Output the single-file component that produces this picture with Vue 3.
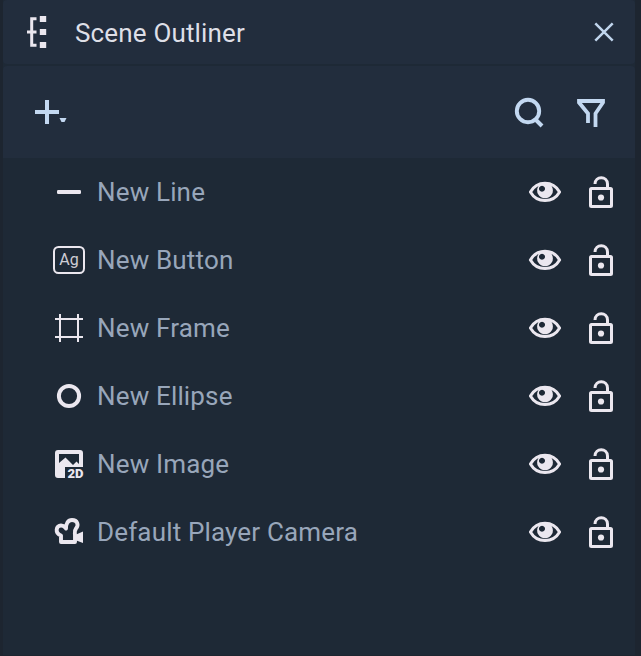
<script setup>
const rows = [
  { type: 'line', name: 'New Line' },
  { type: 'button', name: 'New Button' },
  { type: 'frame', name: 'New Frame' },
  { type: 'ellipse', name: 'New Ellipse' },
  { type: 'image', name: 'New Image' },
  { type: 'camera', name: 'Default Player Camera' },
]
</script>

<template>
  <div class="window">
    <section class="panel">
      <header class="header">
        <svg class="tree" width="20" height="32" viewBox="0 0 20 32">
          <path d="M9.500 2.700H4.700V29.300H9.500M0 16H9.500" fill="none" stroke="currentColor" stroke-width="3" />
          <path d="M12.800 0h6.400v6h-6.400zM12.800 13h6.400v6h-6.400zM12.800 26h6.400v6h-6.400z" fill="currentColor" />
        </svg>
        <h1 class="title">Scene Outliner</h1>
        <svg class="close" width="20" height="20" viewBox="0 0 20 20">
          <path d="M1.300 1.300L18.700 18.700M18.700 1.300L1.300 18.700" stroke="currentColor" stroke-width="2.500" />
        </svg>
      </header>
      <div class="toolbar">
        <svg class="add" width="34" height="26" viewBox="0 0 34 26">
          <path d="M12 1V25M0 13H24" stroke="currentColor" stroke-width="4" />
          <path d="M24.500 19h7l-2 4h-3z" fill="currentColor" />
        </svg>
        <svg class="search" width="32" height="32" viewBox="0 0 32 32">
          <circle cx="15" cy="14" r="11.200" fill="none" stroke="currentColor" stroke-width="3.900" />
          <path d="M21.500 21.500L29 29" stroke="currentColor" stroke-width="4" />
        </svg>
        <svg class="filter" width="30" height="32" viewBox="0 0 30 32">
          <path d="M12 27V17.500L3 6.500V5H27V6.500L19.500 17.500V31" fill="none" stroke="currentColor" stroke-width="3.800" />
        </svg>
      </div>
      <ul class="list">
        <li v-for="row in rows" :key="row.name" class="row">
          <svg class="kind" width="36" height="36" viewBox="0 0 36 36">
            <rect v-if="row.type === 'line'" x="6" y="16" width="24" height="4" rx="1.200" fill="currentColor" />
            <g v-else-if="row.type === 'button'">
              <rect x="3" y="5" width="30" height="26" rx="4.500" fill="none" stroke="currentColor" stroke-width="2" />
              <text x="18" y="22.500" text-anchor="middle" class="ag">Ag</text>
            </g>
            <path v-else-if="row.type === 'frame'" d="M9 4V32M27 4V32M4 9H32M4 27H32" stroke="currentColor" stroke-width="2" />
            <circle v-else-if="row.type === 'ellipse'" cx="18" cy="18" r="10.100" fill="none" stroke="currentColor" stroke-width="4" />
            <g v-else-if="row.type === 'image'">
              <path fill="currentColor" fill-rule="evenodd" d="M7 4H29Q32 4 32 7V21H14V32H7Q4 32 4 29V7Q4 4 7 4ZM8 8V17L14.500 11.500L22 19L25.500 15.500L28 18V8Z" />
              <text x="16.500" y="32" textLength="16" lengthAdjust="spacingAndGlyphs" class="two-d">2D</text>
            </g>
            <g v-else>
              <path d="M10 28V21.500C3.500 19 5 11.500 10 11.500C13 11.500 13.500 13 15 14.500C15 9.500 17 6 21 6C26.500 6 28 11 25 14.500C22.800 17.500 24 19 24 21V28Z" fill="none" stroke="currentColor" stroke-width="3.900" stroke-linejoin="round" />
              <path d="M24 21L32 17.500V29L24 26Z" fill="currentColor" />
            </g>
          </svg>
          <span class="name">{{ row.name }}</span>
          <svg class="eye" width="34" height="24" viewBox="0 0 34 24">
            <path d="M2.400 12C9 0.300 25 0.300 31.600 12C25 23.400 9 23.400 2.400 12Z" fill="none" stroke="currentColor" stroke-width="3" stroke-linejoin="round" />
            <path fill="currentColor" fill-rule="evenodd" d="M17 2.500a7.900 7.900 0 1 0 .01 0ZM14 5.800a3 3 0 1 1-.01 0Z" />
          </svg>
          <svg class="lock" width="26" height="34" viewBox="0 0 26 34">
            <rect x="2.500" y="13.500" width="21" height="18" rx="1" fill="none" stroke="currentColor" stroke-width="3" />
            <path d="M7 9C7 0.700 19.500 0.700 19.500 9V13" fill="none" stroke="currentColor" stroke-width="3" />
            <circle cx="13" cy="22.500" r="3.100" fill="currentColor" />
          </svg>
        </li>
      </ul>
    </section>
  </div>
</template>

<style>
body { background: #1d2531; }
</style>

<style scoped>
.window { box-sizing: border-box; width: 641px; height: 656px; padding: 0 6px 1px 3px; background: #1d2530; font-family: Roboto, sans-serif; }
.panel { height: 655px; background: #1e2936; display: flex; flex-direction: column; }
.header { box-sizing: border-box; height: 64px; flex: none; display: flex; align-items: center; padding: 0 21px 0 24px; background: #222d3d; border-radius: 4px; color: #ebe7ef; }
.title { flex: 1; margin: 2px 0 0 28px; font-size: 26px; line-height: 32px; font-weight: 400; letter-spacing: 0.160px; color: #dedfe7; }
.close { color: #c0d5ed; }
.toolbar { box-sizing: border-box; height: 92px; flex: none; margin-top: 2px; display: flex; align-items: center; padding: 0 29px 0 32px; background: #222d3d; border-radius: 4px 4px 0 0; color: #c3d8f1; }
.add { margin-right: auto; }
.search { margin: 2px 31px 0 0; }
.list { margin: 0; padding: 0; list-style: none; }
.row { box-sizing: border-box; height: 68px; display: flex; align-items: center; padding: 0 21px 0 48px; color: #ebe7ef; }
.name { flex: 1; margin-left: 10px; font-size: 26px; line-height: 32px; letter-spacing: 0.160px; color: #98a6ba; }
.eye { margin-right: 26px; }
.ag { font: 400 16px Roboto, sans-serif; fill: #cfcdd5; }
.two-d { font: 900 12px Roboto, sans-serif; fill: currentColor; }
</style>
